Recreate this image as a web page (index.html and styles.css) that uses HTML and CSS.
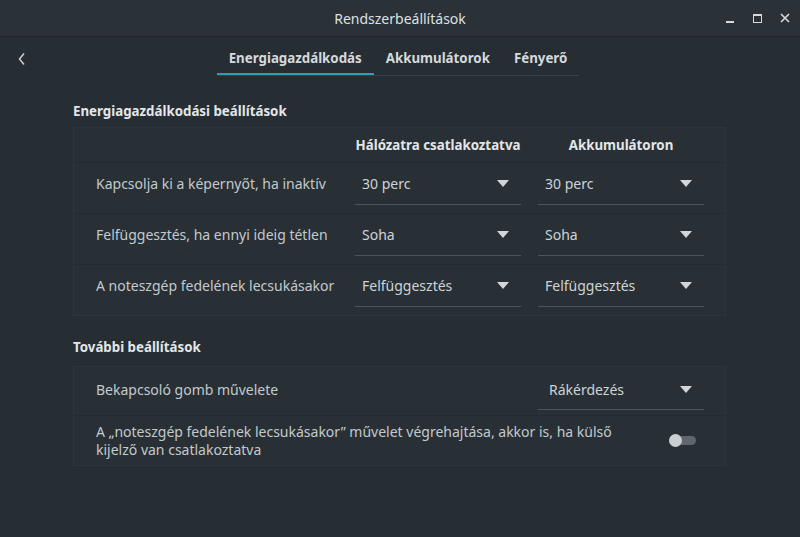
FILE: index.html
```html
<!DOCTYPE html>
<html>
<head>
<meta charset="utf-8">
<link rel="stylesheet" href="styles.css">
</head>
<body>
<div class="window">
  <header class="titlebar">
    <div class="title">Rendszerbeállítások</div>
    <div class="wbtns">
      <span class="wb wb-min"></span>
      <span class="wb wb-max"></span>
      <span class="wb wb-close">
        <svg width="10" height="10" viewBox="0 0 10 10"><path d="M1 1 L9 9 M9 1 L1 9" stroke="#d6dadc" stroke-width="1.6" fill="none"/></svg>
      </span>
    </div>
  </header>
  <nav class="tabbar">
    <div class="back">
      <svg width="10" height="14" viewBox="0 0 10 14"><path d="M7 1.5 L2.5 7 L7 12.5" stroke="#c9cfd2" stroke-width="1.5" fill="none"/></svg>
    </div>
    <div class="tabs">
      <div class="tab active">Energiagazdálkodás</div>
      <div class="tab">Akkumulátorok</div>
      <div class="tab">Fényerő</div>
    </div>
  </nav>
  <main class="content">
    <h2 class="section-title">Energiagazdálkodási beállítások</h2>
    <div class="card">
      <div class="row head">
        <div></div>
        <div class="colhead">Hálózatra csatlakoztatva</div>
        <div class="colhead">Akkumulátoron</div>
      </div>
      <div class="row">
        <div class="label">Kapcsolja ki a képernyőt, ha inaktív</div>
        <div class="combo"><span>30 perc</span><i class="arrow"></i></div>
        <div class="combo"><span>30 perc</span><i class="arrow"></i></div>
      </div>
      <div class="row">
        <div class="label">Felfüggesztés, ha ennyi ideig tétlen</div>
        <div class="combo"><span>Soha</span><i class="arrow"></i></div>
        <div class="combo"><span>Soha</span><i class="arrow"></i></div>
      </div>
      <div class="row">
        <div class="label">A noteszgép fedelének lecsukásakor</div>
        <div class="combo"><span>Felfüggesztés</span><i class="arrow"></i></div>
        <div class="combo"><span>Felfüggesztés</span><i class="arrow"></i></div>
      </div>
    </div>

    <h2 class="section-title second">További beállítások</h2>
    <div class="card">
      <div class="row2">
        <div class="label2 single">Bekapcsoló gomb művelete</div>
        <div class="combo"><span>Rákérdezés</span><i class="arrow"></i></div>
      </div>
      <div class="row3">
        <div class="label2">A „noteszgép fedelének lecsukásakor” művelet végrehajtása, akkor is, ha külső<br>kijelző van csatlakoztatva</div>
        <div class="toggle-cell"><span class="toggle"><span class="knob"></span></span></div>
      </div>
    </div>
  </main>
</div>
</body>
</html>
```

FILE: styles.css
```css
* { box-sizing: border-box; margin: 0; padding: 0; }
html, body { width: 800px; height: 537px; overflow: hidden; }
body {
  background: #262d33;
  font-family: "Noto Sans", "Open Sans", sans-serif;
  font-size: 14px;
  color: #c4c9cc;
}
.window { width: 800px; height: 537px; display: flex; flex-direction: column; }

.titlebar {
  height: 37px;
  background: #2a3137;
  border-bottom: 1px solid #1f252a;
  position: relative;
  display: flex;
  align-items: center;
  justify-content: center;
}
.title { color: #dde1e3; font-size: 14px; }
.wbtns {
  position: absolute;
  right: 10px;
  top: 0;
  height: 36px;
  display: flex;
  align-items: center;
  gap: 18px;
}
.wb { width: 10px; height: 10px; display: block; position: relative; }
.wb-min::after { content: ""; position: absolute; left: 1px; bottom: 0; width: 8px; height: 2px; background: #d6dadc; }
.wb-max { border: 1.6px solid #d6dadc; border-top-width: 2.5px; width: 9px; height: 9px; margin-top: 1px; }
.wb-close svg { display: block; }

.tabbar {
  height: 42px;
  display: flex;
  align-items: flex-start;
  position: relative;
  justify-content: center;
}
.back { position: absolute; left: 17px; top: 15px; }
.back svg { display: block; }
.tabs {
  display: flex;
  margin-top: 11px;
  border-bottom: 1px solid #3a4248;
  margin-left: -4px;
}
.tab {
  padding: 0 12px 0 12px;
  height: 27px;
  line-height: 21px;
  font-weight: bold;
  color: #d5d9db;
  font-size: 13.3px;
}
.tab.active { border-bottom: 2px solid #2aa0b2; margin-bottom: -1px; }

.content { padding: 0 74px 0 73px; }
.section-title {
  font-size: 13.3px;
  font-weight: bold;
  color: #e3e6e8;
  margin-top: 23px;
  height: 25px;
  line-height: 18px;
}
.section-title.second { margin-top: 22px; height: 28px; }

.card {
  background: #283036;
  border: 1px solid #2d353b;
}
.row {
  display: grid;
  grid-template-columns: 1fr 166px 166px;
  column-gap: 17px;
  padding: 0 21px 0 22px;
  height: 51px;
  align-items: start;
  border-top: 1px solid #232a30;
}
.row.head { height: 34px; border-top: none; align-items: center; }
.colhead {
  text-align: center;
  font-weight: bold;
  font-size: 13.3px;
  color: #e3e6e8;
  white-space: nowrap;
}
.label { white-space: nowrap; color: #c4c9cc; line-height: 42px; }
.combo {
  height: 42px;
  border-bottom: 1px solid #4b545a;
  display: flex;
  align-items: center;
  justify-content: space-between;
  padding: 0 12px 0 7px;
  color: #cfd3d5;
}
.arrow {
  width: 0; height: 0;
  border-left: 6.5px solid transparent;
  border-right: 6.5px solid transparent;
  border-top: 7px solid #d2d6d8;
}
.row2 {
  display: grid;
  grid-template-columns: 1fr 166px;
  column-gap: 20px;
  padding: 3px 21px 0 22px;
  height: 48px;
  align-items: start;
}
.row2 .combo { height: 40px; padding-left: 11px; }
.label2.single { line-height: 40px; }
.row3 {
  display: flex;
  align-items: center;
  justify-content: space-between;
  padding: 0 29px 0 22px;
  height: 50px;
  border-top: 1px solid #232a30;
}
.row3 .label2 { line-height: 18px; white-space: nowrap; }
.label2 { color: #c4c9cc; }
.toggle-cell { display: flex; }
.toggle {
  width: 27px; height: 9px;
  border-radius: 5px;
  background: #5f676c;
  position: relative;
  display: block;
}
.knob {
  position: absolute;
  left: 0; top: -2px;
  width: 13px; height: 13px;
  border-radius: 50%;
  background: #c9ced1;
}
```
